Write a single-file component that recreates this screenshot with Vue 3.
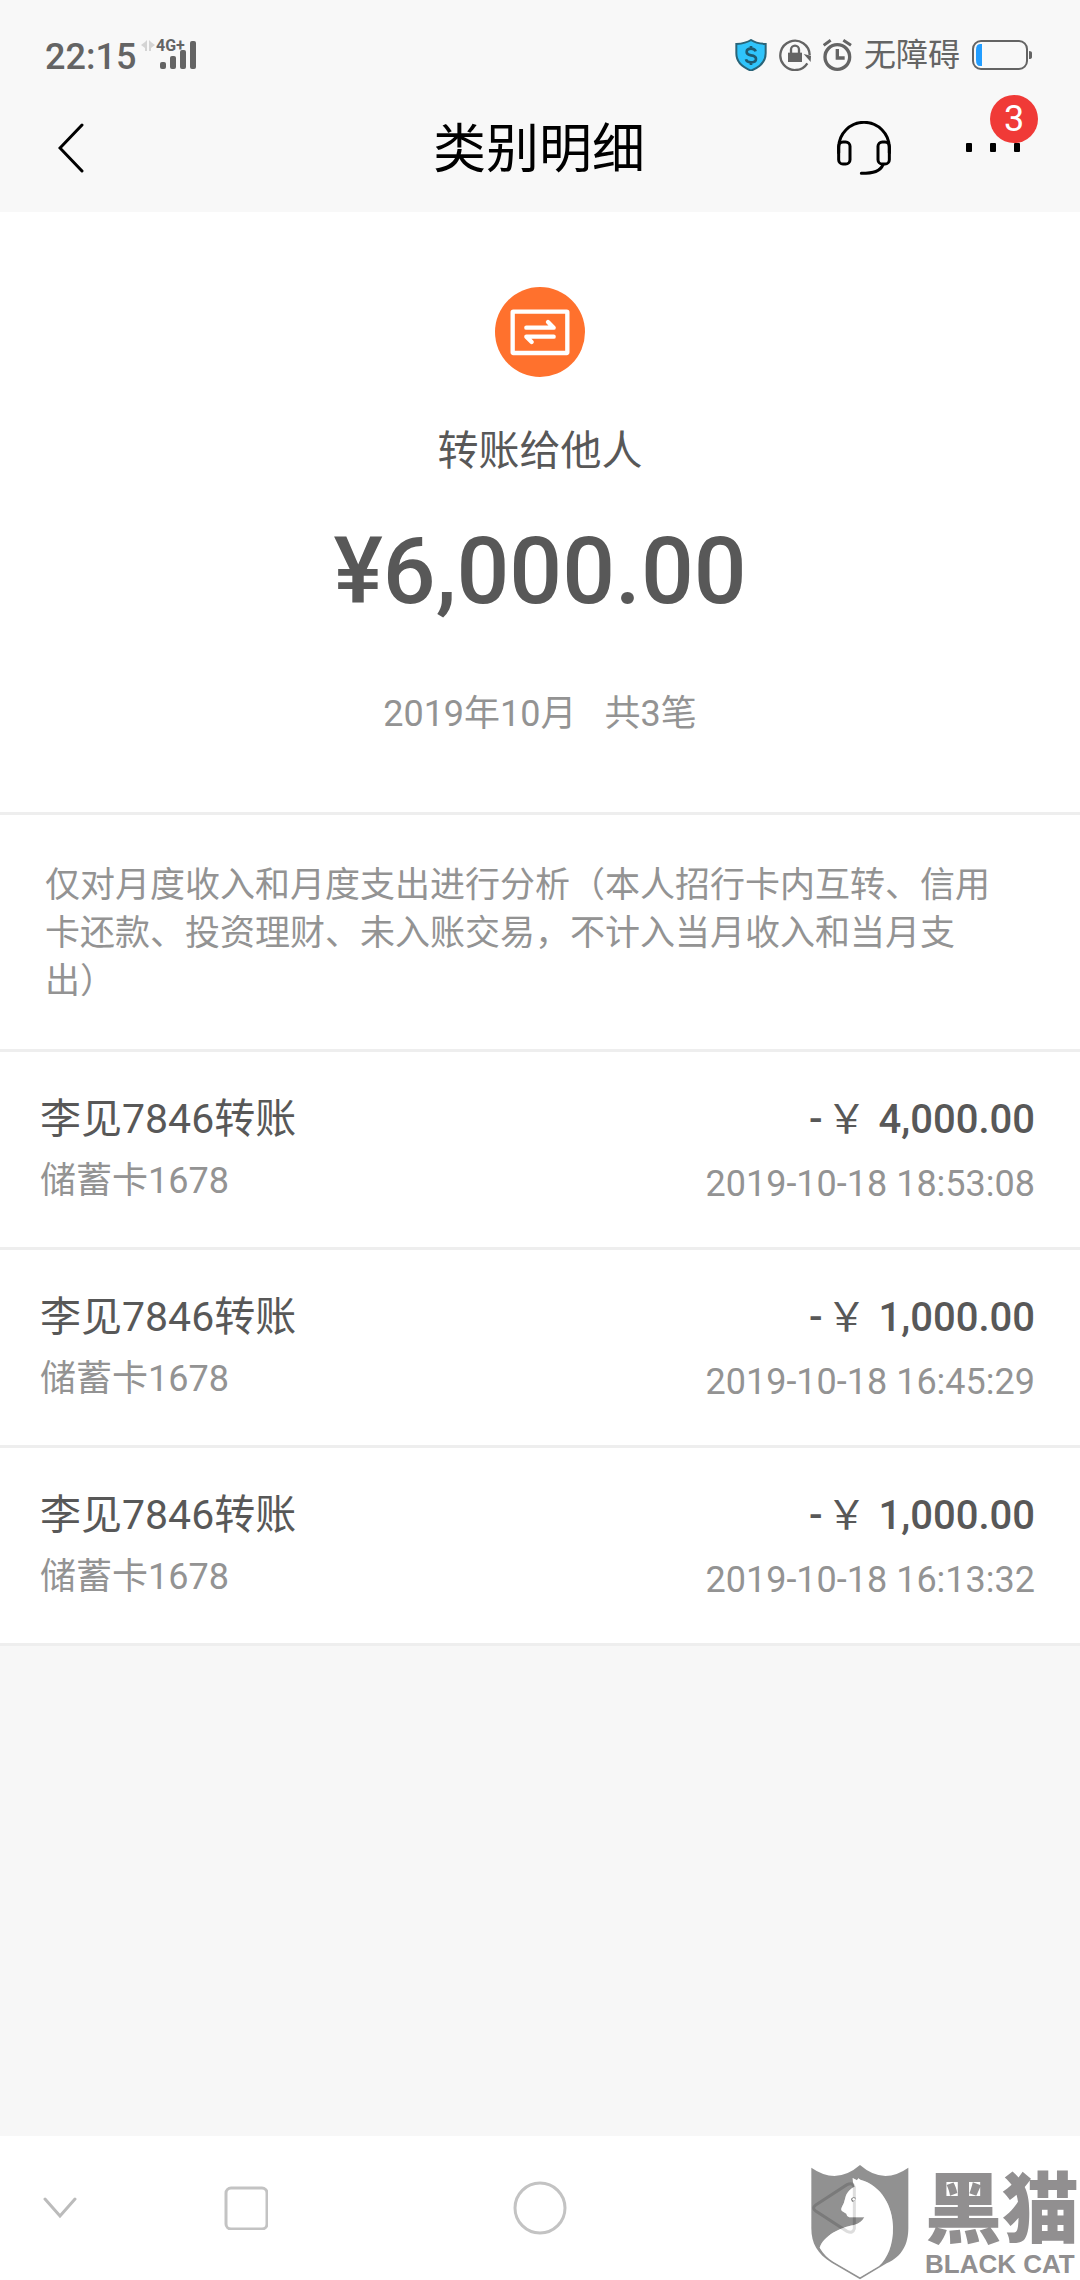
<template>
  <div class="page">
    <header class="header">
      <div class="status">
        <div class="status-side">
          <span class="clock">22:15</span>
          <svg class="signal" viewBox="0 -6 56 46">
            <path fill="#d4d4d4" d="M6 2v11H4V10L0 7l4-3zM8 2v11h2V10l4-3-4-3z" />
            <text x="15" y="13">4G+</text>
            <rect x="19" y="24" width="6" height="7" rx="2" />
            <rect x="29" y="18" width="6" height="13" rx="2" />
            <rect x="39" y="12" width="6" height="19" rx="2" />
            <rect x="49" y="3" width="6" height="28" rx="2" />
          </svg>
        </div>
        <div class="status-side status-right">
          <svg class="shield" viewBox="0 0 96 98">
            <path
              d="M48 3C36 11 20 14 4 15v28c0 24 18 42 44 52 26-10 44-28 44-52V15C76 14 60 11 48 3z"
              fill="#2fc4fb"
              stroke="#2a6478"
              stroke-width="6"
            />
            <path
              d="M62 37c-2-6-7-8-14-8-8 0-13 4-13 10 0 7 6 9 13 10 8 1 15 3 15 11 0 6-6 10-15 10-8 0-14-3-15-9M48 21v9M48 69v9"
              fill="none"
              stroke="#1f5a70"
              stroke-width="8"
            />
          </svg>
          <svg class="lock" viewBox="0 0 96 96">
            <path d="M85 73A44 44 0 1 1 92 48" fill="none" stroke="#646464" stroke-width="7" />
            <path d="M74 45l22 5-1 19z" fill="#646464" />
            <rect x="27" y="41" width="42" height="28" fill="#646464" />
            <path d="M36 42V32a12 12 0 0 1 24 0v10" fill="none" stroke="#646464" stroke-width="7" />
          </svg>
          <svg class="alarm" viewBox="0 0 87 96">
            <g fill="none" stroke="#646464">
              <circle cx="43" cy="54" r="37" stroke-width="10" />
              <path d="M43 30v27h22" stroke-width="10" />
              <path d="M2 19L23 4M84 19L61 4" stroke-width="9" />
            </g>
          </svg>
          <span class="mode">无障碍</span>
          <svg class="battery" viewBox="0 0 60 30">
            <rect x="1" y="1" width="54" height="28" rx="8" fill="none" stroke="#646464" stroke-width="2" />
            <path d="M10 4v22H8q-4 0-4-6V10q0-6 4-6z" fill="#229dff" />
            <path d="M57 11q3 0 3 2v4q0 2-3 2z" fill="#646464" />
          </svg>
        </div>
      </div>
      <nav class="nav">
        <button class="icon-button back" aria-label="返回">
          <svg viewBox="0 0 26 50">
            <path d="M24 2L2 25l22 23" fill="none" stroke="#000" stroke-width="3" stroke-linecap="round" />
          </svg>
        </button>
        <h1 class="title">类别明细</h1>
        <div class="actions">
          <button class="icon-button headset" aria-label="客服">
            <svg viewBox="0 0 162 162">
              <g fill="none" stroke="#000" stroke-width="9" stroke-linecap="round">
                <path d="M5 95V80a76 76 0 0 1 152 0v15" />
                <rect x="5" y="63" width="34" height="66" rx="13" />
                <rect x="123" y="63" width="34" height="66" rx="13" />
                <path d="M138 131c-8 20-28 26-65 26" />
              </g>
            </svg>
          </button>
          <button class="icon-button more" aria-label="更多">
            <svg viewBox="0 0 54 10">
              <rect width="6" height="9" rx="1" />
              <rect x="24" width="6" height="9" rx="1" />
              <rect x="48" width="6" height="9" rx="1" />
            </svg>
            <span class="badge">3</span>
          </button>
        </div>
      </nav>
    </header>

    <main class="main">
      <section class="summary">
        <svg class="category" viewBox="0 0 270 270">
          <circle cx="135" cy="135" r="135" fill="#ff712d" />
          <rect x="53" y="74" width="164" height="124" rx="2" fill="none" stroke="#fff" stroke-width="13" />
          <g fill="none" stroke="#fff" stroke-width="13" stroke-linecap="round" stroke-linejoin="round">
            <path d="M94 122h82l-17-17" />
            <path d="M176 149H94l16 16" />
          </g>
        </svg>
        <p class="category-name">转账给他人</p>
        <p class="total">¥6,000.00</p>
        <p class="period">
          <span>2019年10月</span>
          <span>共3笔</span>
        </p>
      </section>

      <p class="notice">
        仅对月度收入和月度支出进行分析（本人招行卡内互转、信用卡还款、投资理财、未入账交易，不计入当月收入和当月支出）
      </p>

      <ul class="records">
        <li v-for="record in records" :key="record.time" class="record">
          <div>
            <p class="record-name">{{ record.name }}</p>
            <p class="record-sub">{{ record.card }}</p>
          </div>
          <div class="record-right">
            <p class="record-amount">-<span class="yen">￥</span> {{ record.amount }}</p>
            <p class="record-time">{{ record.time }}</p>
          </div>
        </li>
      </ul>
    </main>

    <footer class="system-bar">
      <button class="icon-button key-hide" aria-label="收起">
        <svg viewBox="0 0 34 22">
          <path d="M2 2l15 17L32 2" fill="none" stroke="#bbb" stroke-width="3" stroke-linecap="round" />
        </svg>
      </button>
      <button class="icon-button key-recent" aria-label="最近任务">
        <svg viewBox="0 0 44 44">
          <rect x="2" y="2" width="41" height="41" rx="5" fill="none" stroke="#c3c3c3" stroke-width="3" />
        </svg>
      </button>
      <button class="icon-button key-home" aria-label="主屏幕">
        <svg viewBox="0 0 54 54">
          <circle cx="27" cy="27" r="25" fill="none" stroke="#c3c3c3" stroke-width="3" />
        </svg>
      </button>
      <button class="icon-button key-back" aria-label="后退">
        <svg viewBox="0 0 132 156">
          <path
            d="M10 70L105 8q18-8 22 8v124q-4 16-22 8L10 86q-10-8 0-16z"
            fill="none"
            stroke="#c1c1c1"
            stroke-width="9"
          />
        </svg>
      </button>
      <div class="watermark">
        <svg class="cat" viewBox="93 162 294 348">
          <path
            fill="#505050"
            fill-opacity="0.63"
            fill-rule="evenodd"
            d="M94 173Q170 226 240 165Q310 226 385 173V355C385 400 368 440 320 460L240 508L155 458C112 432 94 400 94 355Z
              M218 204L231 211L235 205L241 209C305 226 338 290 339 350C340 405 322 445 297 468L240 502L160 455Q135 440 119 413C132 377 178 353 222 345Q244 339 253 322H208Q200 320 199 311L187 304Q181 299 186 290Q193 278 196 263C200 247 211 236 224 230Q217 217 218 204Z"
          />
          <path
            fill="#fff"
            fill-opacity="0.45"
            d="M218 204L231 211L235 205L241 209C305 226 338 290 339 350C340 405 322 445 297 468L240 502L160 455Q135 440 119 413C132 377 178 353 222 345Q244 339 253 322H208Q200 320 199 311L187 304Q181 299 186 290Q193 278 196 263C200 247 211 236 224 230Q217 217 218 204Z"
          />
          <path d="M213 267q4-7 14-4-2 12-11 12z" fill="#777" />
          <circle cx="221" cy="268" r="4" fill="#fff" />
        </svg>
        <div class="brand">
          <span class="brand-cn">黑猫</span>
          <span class="brand-en">BLACK CAT</span>
        </div>
      </div>
    </footer>
  </div>
</template>

<script setup>
import { ref } from 'vue'

const records = ref([
  { name: '李见7846转账', card: '储蓄卡1678', amount: '4,000.00', time: '2019-10-18 18:53:08' },
  { name: '李见7846转账', card: '储蓄卡1678', amount: '1,000.00', time: '2019-10-18 16:45:29' },
  { name: '李见7846转账', card: '储蓄卡1678', amount: '1,000.00', time: '2019-10-18 16:13:32' },
])
</script>

<style>
body {
  margin: 0;
  background: #f7f7f7;
}
</style>

<style scoped>
.page {
  display: flex;
  flex-direction: column;
  min-height: 100vh;
  background: #f7f7f7;
  color: #585858;
  font-family: Roboto, 'Noto Sans CJK SC', sans-serif;
}

p,
h1,
ul {
  margin: 0;
  padding: 0;
}

svg {
  display: block;
  width: 100%;
}

.icon-button {
  position: relative;
  padding: 0;
  border: 0;
  background: none;
  font-family: inherit;
}

.header {
  background: #f8f8f8;
}

/* status bar */
.status {
  display: flex;
  justify-content: space-between;
  height: 58px;
  padding: 26px 48px 0 45px;
  color: #646464;
}
.status-side {
  display: flex;
  align-items: center;
  height: 58px;
}
.status-right {
  gap: 12px;
}
.clock {
  padding-top: 4px;
  font-size: 36px;
  font-weight: 500;
  line-height: 48px;
}
.signal {
  width: 56px;
  margin-left: 5px;
  fill: #646464;
  font-size: 16px;
  font-weight: 700;
}
.shield,
.lock {
  width: 32px;
}
.alarm {
  width: 29px;
}
.mode {
  font-size: 32px;
  line-height: 48px;
}
.battery {
  width: 60px;
}

/* title bar */
.nav {
  display: grid;
  grid-template-columns: 1fr auto 1fr;
  align-items: center;
  height: 128px;
  padding: 0 60px 0 58px;
}
.back {
  width: 26px;
}
.title {
  padding-top: 4px;
  color: #000;
  font-size: 53px;
  font-weight: 400;
  line-height: 72px;
}
.actions {
  display: flex;
  align-items: center;
  justify-content: flex-end;
  gap: 75px;
}
.headset {
  width: 54px;
}
.more {
  width: 54px;
}
.badge {
  position: absolute;
  right: -18px;
  bottom: 10px;
  width: 48px;
  height: 48px;
  border-radius: 50%;
  background: #f03a37;
  color: #fff;
  font-size: 36px;
  line-height: 48px;
  text-align: center;
}

.main {
  flex: 1;
}

/* summary */
.summary {
  display: flex;
  flex-direction: column;
  align-items: center;
  padding: 75px 0 68px;
  border-bottom: 3px solid #eee;
  background: #fff;
}
.category {
  width: 90px;
}
.category-name {
  margin-top: 44px;
  font-size: 41px;
  line-height: 60px;
}
.total {
  margin-top: 41px;
  font-size: 93px;
  font-weight: 500;
  line-height: 100px;
}
.period {
  display: flex;
  gap: 28px;
  margin-top: 62px;
  color: #939393;
  font-size: 36px;
  line-height: 60px;
}

.notice {
  padding: 47px 80px 43px 45px;
  border-bottom: 3px solid #eee;
  background: #fff;
  color: #939393;
  font-size: 35px;
  line-height: 48px;
}

/* records */
.records {
  list-style: none;
}
.record {
  display: flex;
  justify-content: space-between;
  padding: 36px 45px 33px 40px;
  border-bottom: 3px solid #eee;
  background: #fff;
}
.record-name,
.record-amount {
  font-size: 41px;
  line-height: 63px;
}
.record-sub,
.record-time {
  color: #939393;
  font-size: 36px;
  line-height: 60px;
}
.record-right {
  text-align: right;
}
.record-amount {
  font-size: 40px;
  font-weight: 500;
}
.record-time {
  margin-top: 3px;
}
.yen {
  margin: 0 2px 0 4px;
  font-weight: 400;
}

/* system navigation */
.system-bar {
  position: relative;
  display: grid;
  grid-template-columns: 99px 1fr 1fr 1fr 99px;
  align-items: center;
  justify-items: center;
  height: 144px;
  background: #fff;
}
.key-hide {
  justify-self: start;
  width: 34px;
  margin-left: 43px;
}
.key-recent {
  width: 44px;
}
.key-home {
  width: 54px;
}
.key-back {
  width: 44px;
}

.watermark {
  position: absolute;
  right: 0;
  bottom: 0;
  display: flex;
  align-items: flex-end;
  gap: 16px;
  color: #918f90;
}
.cat {
  width: 98px;
}
.brand {
  display: flex;
  flex-direction: column;
  padding-right: 1px;
}
.brand-cn {
  font-family: 'Noto Sans CJK SC', sans-serif;
  font-size: 77px;
  font-weight: 900;
  line-height: 88px;
}
.brand-en {
  font-family: 'Liberation Sans', sans-serif;
  font-size: 26px;
  font-weight: 700;
  line-height: 32px;
}
</style>
